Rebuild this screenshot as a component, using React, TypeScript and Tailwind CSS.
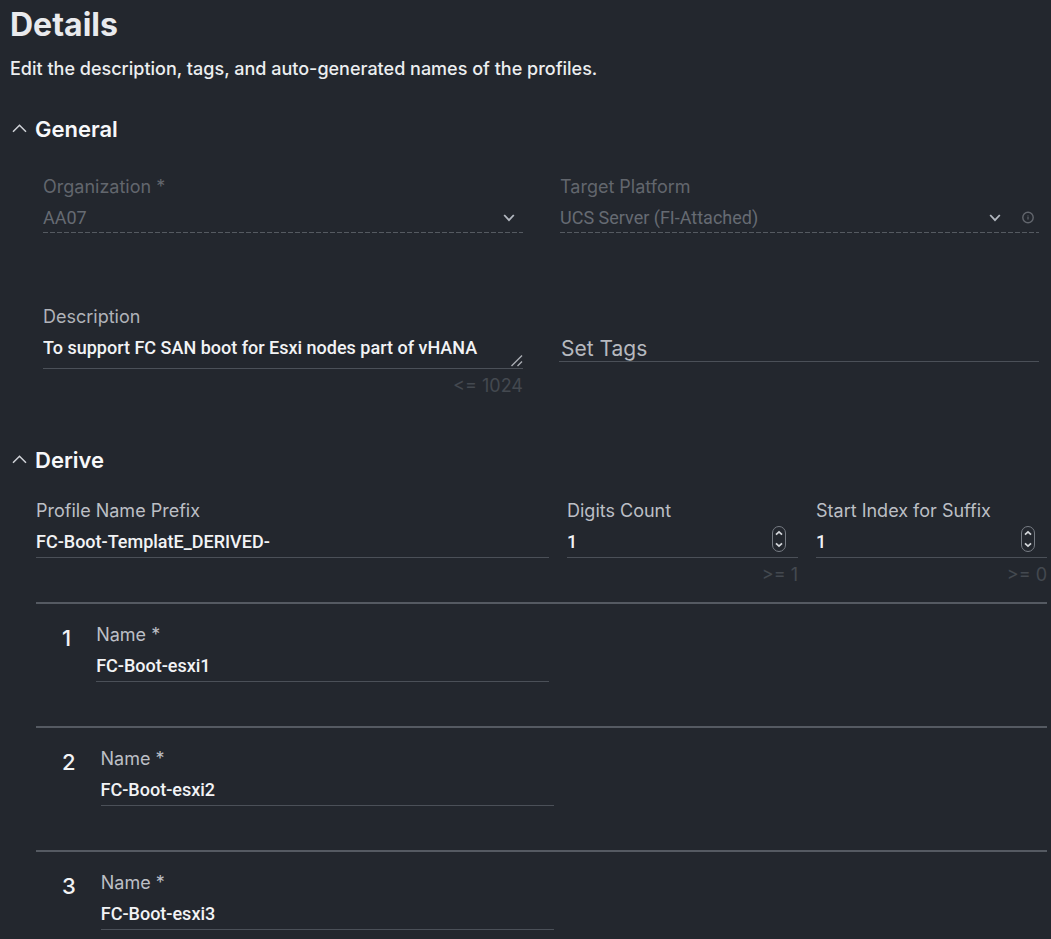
import React, { useState } from 'react';

const labelClass = 'block text-lg leading-6';
const valueClass =
  'block w-full min-w-0 bg-transparent p-0 font-[Roboto,sans-serif] text-lg leading-6 font-medium text-[#f2f3f5] outline-none';

const ChevronDown: React.FC = () => (
  <svg width="12" height="8" viewBox="0 0 12 8" fill="none" className="pointer-events-none shrink-0">
    <path d="M1.2 1 L6 6.2 L10.8 1" stroke="#b4b9c1" strokeWidth="1.8" />
  </svg>
);

interface SectionProps {
  title: string;
  className?: string;
  children: React.ReactNode;
}

const Section: React.FC<SectionProps> = ({ title, className = '', children }) => {
  const [open, setOpen] = useState(true);

  return (
    <section className={className}>
      <h2>
        <button
          type="button"
          aria-expanded={open}
          onClick={() => setOpen(!open)}
          className="flex items-center gap-2 pl-3 text-[22px] leading-7 font-semibold text-[#f7f8fa]"
        >
          <svg width="15" height="11" viewBox="0 0 15 11" fill="none" className={open ? '' : 'rotate-180'}>
            <path d="M1 7.8 L7.5 1.2 L14 7.8" stroke="#d0d3d8" strokeWidth="1.5" />
          </svg>
          {title}
        </button>
      </h2>
      {open && children}
    </section>
  );
};

interface LockedSelectProps {
  id: string;
  label: string;
  value: string;
  info?: boolean;
}

const LockedSelect: React.FC<LockedSelectProps> = ({ id, label, value, info }) => (
  <div>
    <label htmlFor={id} className={`${labelClass} text-[#62666d]`}>
      {label}
    </label>
    <div className="mt-[7px] flex items-center bg-[linear-gradient(to_right,#555a61_5px,transparent_5px)] bg-[length:7px_1px] bg-bottom-left bg-repeat-x pb-[3px]">
      <select
        id={id}
        disabled
        className="min-w-0 flex-1 appearance-none bg-transparent p-0 font-[Roboto,sans-serif] text-lg leading-6 text-[#666b73] opacity-100"
      >
        <option>{value}</option>
      </select>
      <ChevronDown />
      {info ? (
        <button type="button" aria-label="About this platform" className="mr-1 ml-5">
          <svg width="14" height="14" viewBox="0 0 14 14" fill="none" stroke="#62666d" className="block">
            <circle cx="7" cy="6.5" r="5.2" strokeWidth="1.4" />
            <path d="M7 4.4 V5.4 M7 6 V8.6" strokeWidth="1.2" />
          </svg>
        </button>
      ) : (
        <span className="w-2" />
      )}
    </div>
  </div>
);

interface NumberFieldProps {
  id: string;
  label: string;
  min: number;
}

const NumberField: React.FC<NumberFieldProps> = ({ id, label, min }) => {
  const [value, setValue] = useState(1);

  return (
    <div>
      <label htmlFor={id} className={`${labelClass} text-[#bcbfc5]`}>
        {label}
      </label>
      <div className="mt-[7px] flex items-start border-b border-[#4b5058] pr-3 pb-[3px]">
        <input
          id={id}
          type="number"
          min={min}
          value={value}
          onChange={(e) => setValue(Number(e.target.value))}
          className={`${valueClass} flex-1 [appearance:textfield] [&::-webkit-inner-spin-button]:appearance-none`}
        />
        <div className="-my-1 flex h-[26px] w-[14px] shrink-0 flex-col items-center justify-between rounded-full border border-[#777c84] py-[3px]">
          <button type="button" aria-label={`Increase ${label}`} onClick={() => setValue(value + 1)}>
            <svg width="8" height="6" viewBox="0 0 8 6" fill="none" className="block">
              <path d="M1 4.6 L4 1.8 L7 4.6" stroke="#d5d8dc" strokeWidth="1.7" />
            </svg>
          </button>
          <button type="button" aria-label={`Decrease ${label}`} onClick={() => setValue(Math.max(min, value - 1))}>
            <svg width="8" height="6" viewBox="0 0 8 6" fill="none" className="block">
              <path d="M1 1.4 L4 4.2 L7 1.4" stroke="#d5d8dc" strokeWidth="1.7" />
            </svg>
          </button>
        </div>
      </div>
      <p className="mt-[5px] text-right text-lg leading-6 text-[#444950]">&gt;= {min}</p>
    </div>
  );
};

const profiles = ['FC-Boot-esxi1', 'FC-Boot-esxi2', 'FC-Boot-esxi3'];

export default function App() {
  return (
    <main className="min-h-screen bg-[#23272e] pt-[5px] pb-2 font-[Inter,sans-serif]">
      <h1 className="pl-[10px] text-[32px] leading-10 font-bold text-[#e9eaed]">Details</h1>
      <p className="mt-3 pl-[10px] text-lg leading-6 font-medium text-[#eceef0]">
        Edit the description, tags, and auto-generated names of the profiles.
      </p>

      <Section title="General" className="mt-[34px]">
        <div className="mt-8 grid grid-cols-2 gap-x-9 gap-y-[72px] pr-3 pl-[43px]">
          <LockedSelect id="organization" label="Organization *" value="AA07" />
          <div className="pl-px">
            <LockedSelect id="platform" label="Target Platform" value="UCS Server (FI-Attached)" info />
          </div>

          <div>
            <label htmlFor="description" className={`${labelClass} text-[#b0b3b9]`}>
              Description
            </label>
            <div className="relative mt-[7px] border-b border-[#4b5058] pb-2">
              <textarea
                id="description"
                rows={1}
                defaultValue="To support FC SAN boot for Esxi nodes part of vHANA"
                className={`${valueClass} resize-none overflow-hidden`}
              />
              <svg width="12" height="12" viewBox="0 0 12 12" className="absolute right-0 bottom-px" stroke="#a9adb3">
                <path d="M0.5 11 L11 0.5 M6.5 11 L11 6.5" strokeWidth="1.4" />
              </svg>
            </div>
            <p className="mt-[5px] text-right text-lg leading-6 text-[#444950]">&lt;= 1024</p>
          </div>

          <div className="pt-8">
            <input
              aria-label="Set Tags"
              placeholder="Set Tags"
              className="block w-full border-b border-[#4b5058] bg-transparent pl-[2px] text-[21px] leading-6 text-[#b6b9bf] outline-none placeholder:text-[#b6b9bf]"
            />
          </div>
        </div>
      </Section>

      <Section title="Derive" className="mt-12">
        <div className="mt-[25px] pr-1 pl-9">
          <div className="grid grid-cols-[513fr_231fr_231fr] gap-x-[18px]">
            <div>
              <label htmlFor="prefix" className={`${labelClass} text-[#bcbfc5]`}>
                Profile Name Prefix
              </label>
              <div className="mt-[7px] border-b border-[#4b5058] pb-[3px]">
                <input id="prefix" defaultValue="FC-Boot-TemplatE_DERIVED-" className={valueClass} />
              </div>
            </div>
            <NumberField id="digits" label="Digits Count" min={1} />
            <NumberField id="start-index" label="Start Index for Suffix" min={0} />
          </div>

          <ol className="mt-[15px]">
            {profiles.map((name, index) => (
              <li
                key={name}
                className="flex items-start gap-[25px] border-t-2 border-[#555a62] pt-[18px] pb-11 pl-[26px] last:pb-0"
              >
                <span className="pt-1 text-[22px] leading-6 font-medium text-[#f2f3f5]">{index + 1}</span>
                <div className="w-[46%] pt-px">
                  <label htmlFor={`name-${index}`} className={`${labelClass} text-[#bcbfc5]`}>
                    Name *
                  </label>
                  <div className="mt-[7px] border-b border-[#4b5058] pb-[3px]">
                    <input id={`name-${index}`} defaultValue={name} className={valueClass} />
                  </div>
                </div>
              </li>
            ))}
          </ol>
        </div>
      </Section>
    </main>
  );
}
